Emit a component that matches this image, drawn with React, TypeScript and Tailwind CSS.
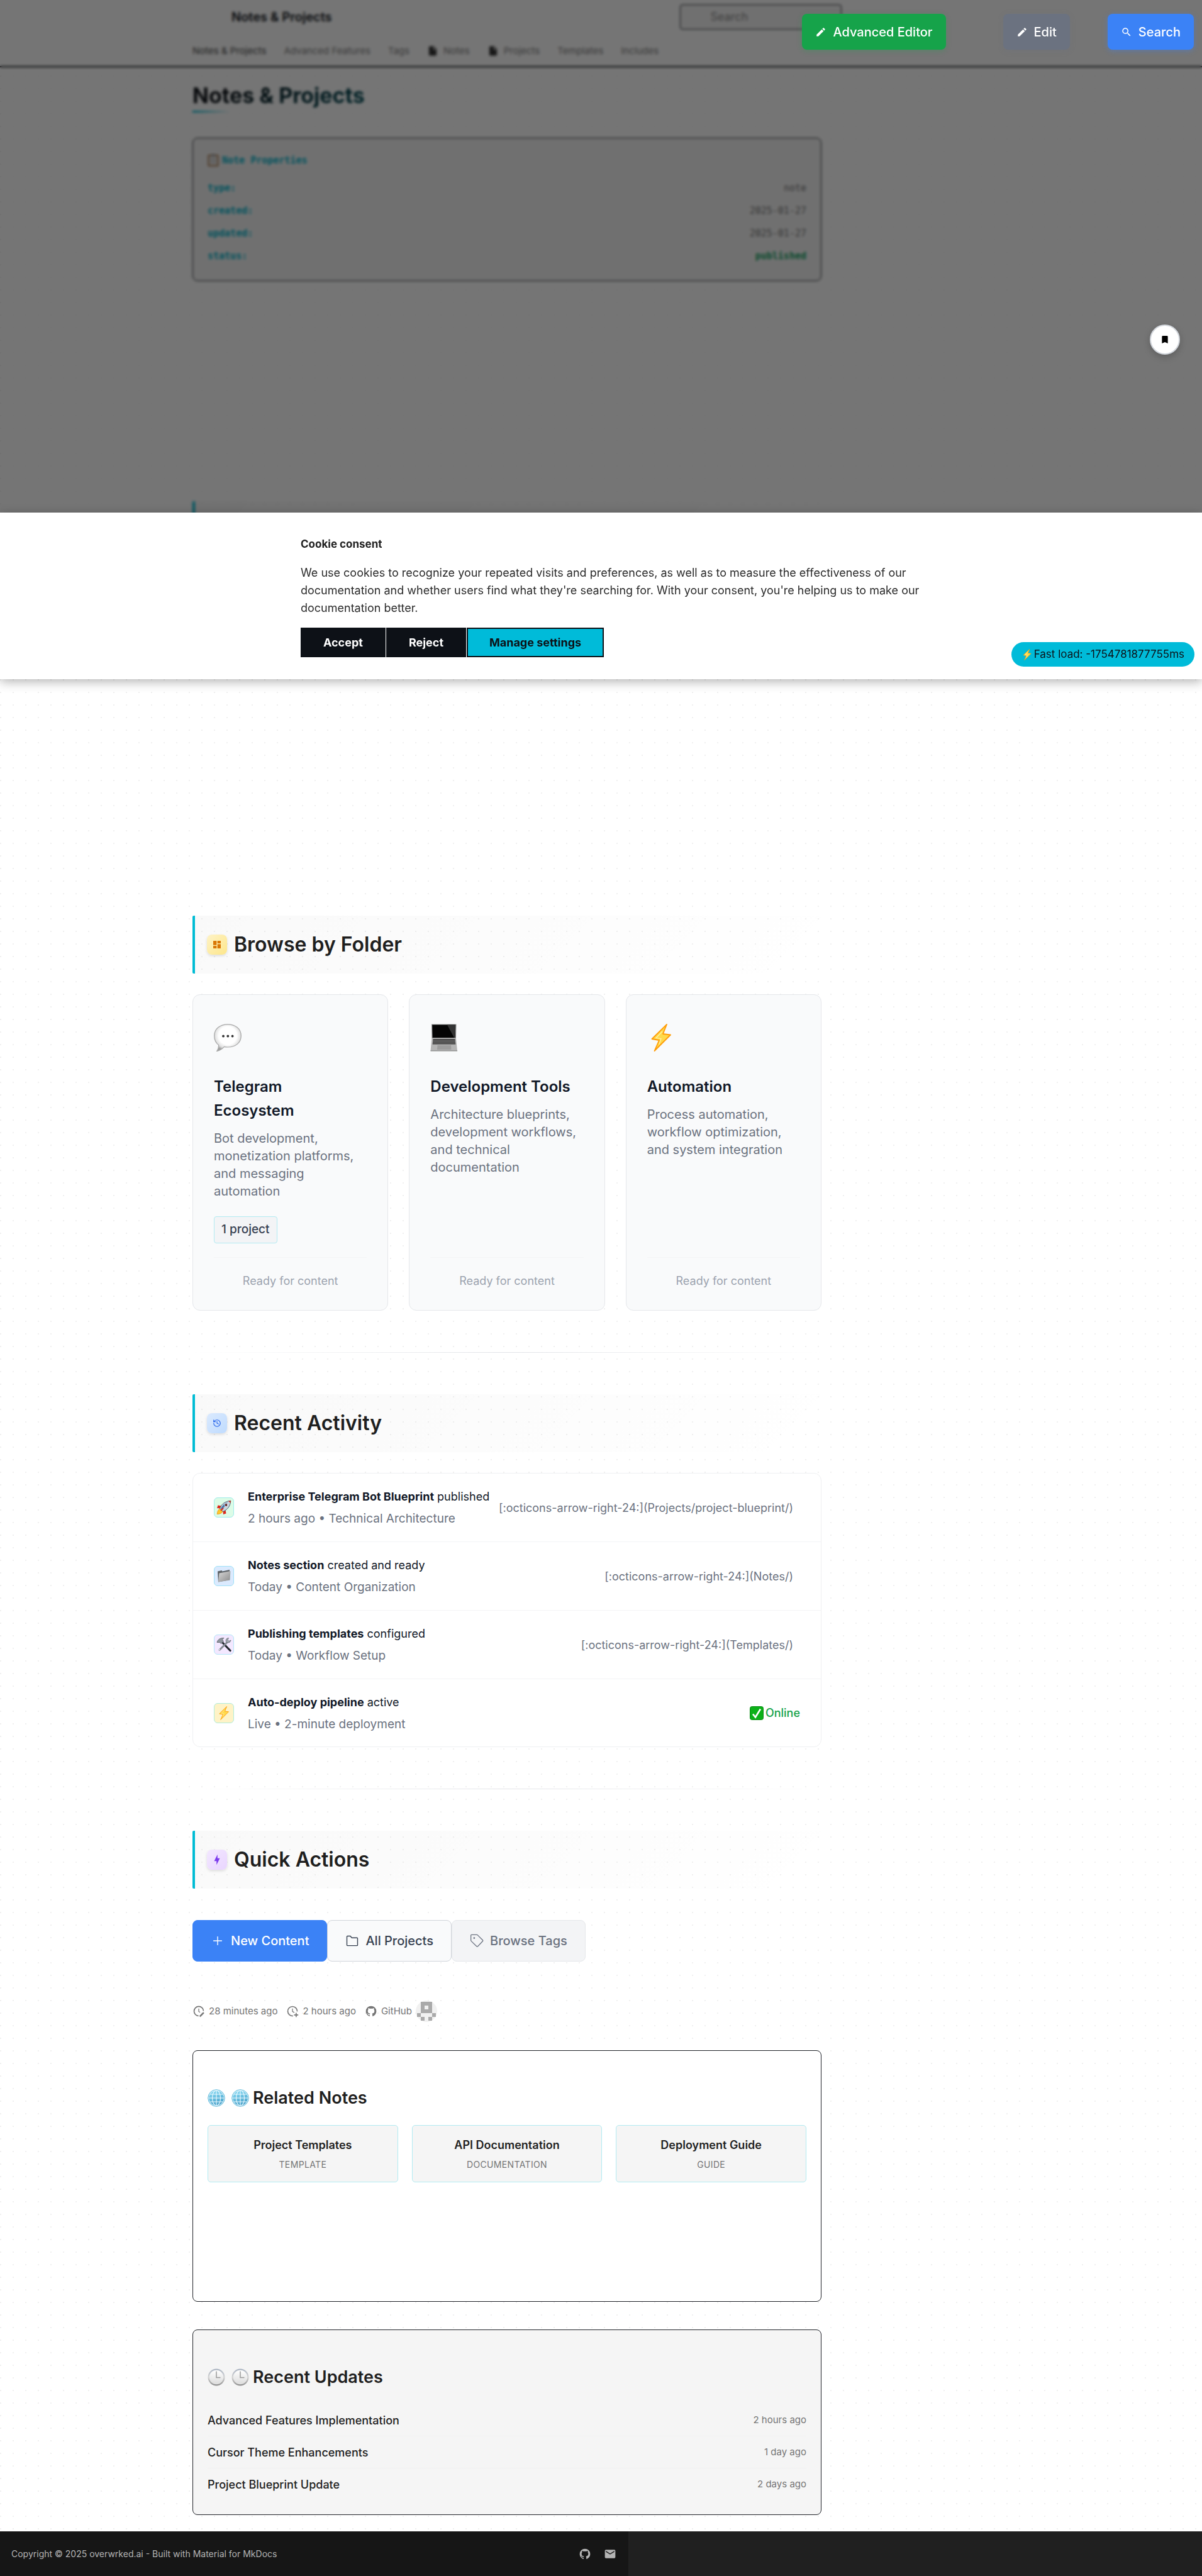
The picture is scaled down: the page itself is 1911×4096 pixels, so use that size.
import type { ReactNode } from "react";
import { History, Plus } from "lucide-react";

/* ---------- icons ---------- */

function Mdi({ d, className }: { d: string; className?: string }) {
  return (
    <svg viewBox="0 0 24 24" fill="currentColor" className={className} aria-hidden="true">
      <path d={d} />
    </svg>
  );
}

const paths = {
  pencil:
    "M20.71 7.04c.39-.39.39-1.04 0-1.41l-2.34-2.34c-.37-.39-1.02-.39-1.41 0l-1.84 1.83 3.75 3.75M3 17.25V21h3.75L17.81 9.93l-3.75-3.75z",
  magnify:
    "M9.5 3A6.5 6.5 0 0 1 16 9.5c0 1.61-.59 3.09-1.56 4.23l.27.27h.79l5 5-1.5 1.5-5-5v-.79l-.27-.27A6.52 6.52 0 0 1 9.5 16 6.5 6.5 0 0 1 3 9.5 6.5 6.5 0 0 1 9.5 3m0 2C7 5 5 7 5 9.5S7 14 9.5 14 14 12 14 9.5 12 5 9.5 5",
  bookmark: "M17 3H7a2 2 0 0 0-2 2v16l7-3 7 3V5a2 2 0 0 0-2-2",
  dashboard: "M13 3v6h8V3m-8 18h8V11h-8M3 21h8v-6H3m0-2h8V3H3z",
  bolt: "M11 15H6l7-14v8h5l-7 14z",
  github:
    "M12 2A10 10 0 0 0 2 12c0 4.42 2.87 8.17 6.84 9.5.5.08.66-.23.66-.5v-1.69c-2.77.6-3.36-1.34-3.36-1.34-.46-1.16-1.11-1.47-1.11-1.47-.91-.62.07-.6.07-.6 1 .07 1.53 1.03 1.53 1.03.87 1.52 2.34 1.07 2.91.83.09-.65.35-1.09.63-1.34-2.22-.25-4.55-1.11-4.55-4.92 0-1.11.38-2 1.03-2.71-.1-.25-.45-1.29.1-2.64 0 0 .84-.27 2.75 1.02.79-.22 1.65-.33 2.5-.33s1.71.11 2.5.33c1.91-1.29 2.75-1.02 2.75-1.02.55 1.35.2 2.39.1 2.64.65.71 1.03 1.6 1.03 2.71 0 3.82-2.34 4.66-4.57 4.91.36.31.69.92.69 1.85V21c0 .27.16.59.67.5C19.14 20.16 22 16.42 22 12A10 10 0 0 0 12 2",
  email:
    "M20 8l-8 5-8-5V6l8 5 8-5m0-2H4c-1.11 0-2 .89-2 2v12a2 2 0 0 0 2 2h16a2 2 0 0 0 2-2V6a2 2 0 0 0-2-2",
  doc: "M6 2h8l6 6v12a2 2 0 0 1-2 2H6a2 2 0 0 1-2-2V4a2 2 0 0 1 2-2m7 1.500V9h5.500zM12 19l6-6v6z",
};

function FolderIcon() {
  return (
    <svg viewBox="0 0 24 24" fill="none" stroke="currentColor" strokeWidth="1.5" strokeLinejoin="round" className="size-[22px]" aria-hidden="true">
      <path d="M3.750 3.750h5l2.500 3h9a1 1 0 0 1 1 1v11.500a1 1 0 0 1-1 1H3.750a1 1 0 0 1-1-1V4.750a1 1 0 0 1 1-1z" />
    </svg>
  );
}

function TagIcon() {
  return (
    <svg viewBox="0 0 24 24" fill="none" stroke="currentColor" strokeWidth="1.4" strokeLinejoin="round" className="size-[22px]" aria-hidden="true">
      <path d="M1.800 2.600a1 1 0 0 1 1-1h9.600a1.500 1.500 0 0 1 1 .4l8.700 8.700a1.500 1.500 0 0 1 0 2.100l-8.300 8.700a1.500 1.500 0 0 1-2.100 0l-9.400-9.100a1.500 1.500 0 0 1-.5-1.100z" />
      <circle cx="7.500" cy="7.200" r="0.800" fill="currentColor" />
    </svg>
  );
}

function ClockEdit() {
  return (
    <svg viewBox="0 0 24 24" fill="none" stroke="currentColor" strokeWidth="2" className="size-5" aria-hidden="true">
      <path d="M11.500 20.900A9 9 0 1 1 21 11.500" />
      <path d="M12 7v5.500l2.500 1.500" strokeWidth="1.500" />
      <path d="M14 22l7.500-7.500" strokeWidth="3" />
    </svg>
  );
}

function ClockPlus() {
  return (
    <svg viewBox="0 0 24 24" fill="none" stroke="currentColor" strokeWidth="2" className="size-5" aria-hidden="true">
      <path d="M13 20.900A9 9 0 1 1 21 12.500" />
      <path d="M12 7v5.500l3.500 2" strokeWidth="1.500" />
      <path d="M19 15v8M15 19h8" />
    </svg>
  );
}

function Avatar() {
  return (
    <svg viewBox="0 0 34 34" className="size-[34px]" role="img" aria-label="Contributor avatar">
      <circle cx="17" cy="17" r="17" fill="#f1f1f1" />
      <g fill="#aaaaaa">
        <path d="M8 2h18v18H8zM14 8v6h6V8z" fillRule="evenodd" />
        <path d="M2 20h6v6H2zM26 20h6v6h-6zM8 26h6v6H8zM20 26h6v6h-6z" />
      </g>
    </svg>
  );
}

/* ---------- pictograms ---------- */

function Bolt({ className }: { className: string }) {
  return (
    <svg viewBox="0 0 44 44" className={className} aria-hidden="true">
      <path d="M31 .8 7.500 24 19 26 11.500 43 37 17.500 25 16z" fill="#ffd94a" stroke="#ff9d0a" strokeWidth="1.800" strokeLinejoin="round" />
      <path d="M24 12 14 22.500l8 1-3 9" fill="none" stroke="#fff2a8" strokeWidth="1.200" />
    </svg>
  );
}

function SpeechBalloon() {
  return (
    <svg viewBox="0 0 44 44" className="size-11" aria-hidden="true">
      <defs>
        <radialGradient id="balloon" cx="0.500" cy="0.420" r="0.560">
          <stop offset="0.600" stopColor="#ffffff" />
          <stop offset="0.850" stopColor="#e0e0e0" />
          <stop offset="1" stopColor="#a0a0a0" />
        </radialGradient>
      </defs>
      <path
        d="M22 .8C34.500.8 43.300 8 43.300 19S34.500 37 22 37c-2 0-4-.2-5.600-.6-2.800 3.400-7 6-11.600 7 1.800-2.800 2.900-6 2.900-9.600C3.200 30.500.7 25.400.7 19 .7 8 9.500.8 22 .8z"
        fill="url(#balloon)"
        stroke="#a8a8a8"
        strokeWidth="1.200"
      />
      <g fill="#333">
        <circle cx="15" cy="19.500" r="1.900" />
        <circle cx="22.300" cy="19.500" r="1.900" />
        <circle cx="29.600" cy="19.500" r="1.900" />
      </g>
    </svg>
  );
}

function Laptop() {
  return (
    <svg viewBox="0 0 44 44" className="size-11" aria-hidden="true">
      <path d="M2 .5h39.500L41 23H2.500z" fill="#8f8f8f" />
      <path d="M3.200 1.500h37L39.800 22H3.600z" fill="#050505" />
      <path d="M27 1.500h13.200L39.800 22H38z" fill="#333" />
      <path d="M2.500 22.500h38.500l2 20.500H.5z" fill="#b4b4b4" />
      <path d="M4.500 24h35l.8 8.500H3.700z" fill="#3a3a3a" />
      <path d="M4.300 26h35.500M4 28.200h36M3.900 30.400h36.300" stroke="#9a9a9a" strokeWidth=".7" />
      <path d="M11.500 34h21.500l.4 7H11z" fill="#9c9c9c" />
      <path d="M.5 42.200h42.600v1.300H.5z" fill="#8a8a8a" />
    </svg>
  );
}

function Rocket() {
  return (
    <svg viewBox="0 0 24 24" className="size-6" aria-hidden="true">
      <path d="M8 9.500 2.500 8.500 1 13l5 .5zM14.500 16l1 5.500-4.500 1.500-.5-5z" fill="#e0281c" />
      <path d="M6 14c-3 1-4.500 4-4.800 8.700C5.500 22.500 9 21 10 18z" fill="#ffc928" stroke="#f08a1d" strokeWidth=".8" />
      <path d="M5.500 13.500C8 7 13.500 2 22.800 1.200 22.500 10 17 16 10.500 18.500z" fill="#c9d6df" stroke="#41586b" strokeWidth=".9" />
      <path d="M7 13.500C9.500 9 13 5.500 18 3.500L9 16z" fill="#4a78a8" />
      <path d="M19 1.800c1.200-.4 2.500-.6 3.800-.6 0 1.300-.2 2.600-.5 3.800z" fill="#d9362b" />
      <circle cx="15.500" cy="8" r="2.300" fill="#5b1d1d" stroke="#e9eef2" strokeWidth=".8" />
      <path d="M7 17l4-4" stroke="#e0281c" strokeWidth="2" />
    </svg>
  );
}

function FileFolder() {
  return (
    <svg viewBox="0 0 24 24" className="size-6" aria-hidden="true">
      <defs>
        <linearGradient id="folder" x1="0" y1="0" x2="1" y2="1">
          <stop offset="0" stopColor="#d8d8d8" />
          <stop offset="1" stopColor="#8b8b8b" />
        </linearGradient>
      </defs>
      <path d="M2 4.500 8.500 3l1 1.500L21 2v16L3 21.500z" fill="#5d6266" />
      <path d="M4.500 7.500 22.500 4l-1 14.500L3 21.500z" fill="url(#folder)" />
    </svg>
  );
}

function Tools() {
  return (
    <svg viewBox="0 0 24 24" className="size-6" aria-hidden="true">
      <path d="M8.500 7.500 22 21.500" stroke="#20252b" strokeWidth="3.200" strokeLinecap="round" />
      <path d="M1 8.500C2 4 6 1.200 12 1.500L9.500 4l2 3-4 3.500-2.300-2z" fill="#8d949c" stroke="#565c63" strokeWidth=".8" />
      <path d="M17.500 8 5 20.500" stroke="#858c94" strokeWidth="3" strokeLinecap="round" />
      <path d="M19.500 1.500c-3.500 0-5.300 3.300-4 6.300 2.500 2.200 7 1.200 7.500-2.800l-3 1.500-2-2z" fill="#a1a8b0" stroke="#656b72" strokeWidth=".8" />
      <circle cx="5" cy="20.300" r="1" fill="#e9edf0" />
    </svg>
  );
}

function CheckMark() {
  return (
    <svg viewBox="0 0 22 22" className="size-[22px]" aria-hidden="true">
      <rect x=".5" y=".5" width="21" height="21" rx="3" fill="#0bb118" stroke="#078a10" />
      <path d="M5 12.500 9 17.500 17 4.500" fill="none" stroke="#fff" strokeWidth="2.600" />
    </svg>
  );
}

function Globe() {
  return (
    <svg viewBox="0 0 28 28" className="size-7" aria-hidden="true">
      <defs>
        <linearGradient id="globe" x1="0" y1="0" x2="0.300" y2="1">
          <stop offset="0" stopColor="#8fe0f7" />
          <stop offset="1" stopColor="#4ba3cb" />
        </linearGradient>
      </defs>
      <circle cx="14" cy="14" r="13.200" fill="url(#globe)" />
      <g fill="none" stroke="#eefaff" strokeWidth="1.100">
        <circle cx="14" cy="14" r="12.400" />
        <ellipse cx="14" cy="14" rx="6.500" ry="12.400" />
        <path d="M14 1.500v25M1.500 14h25M3.500 8h21M3.500 20h21" />
      </g>
      <circle cx="14" cy="14" r="13.300" fill="none" stroke="#58b5d8" strokeWidth=".9" />
    </svg>
  );
}

function ClockFace() {
  return (
    <svg viewBox="0 0 28 28" className="size-7" aria-hidden="true">
      <defs>
        <linearGradient id="rim" x1="0" y1="0" x2="0" y2="1">
          <stop offset="0" stopColor="#aab4c2" />
          <stop offset="0.500" stopColor="#d5d5d5" />
          <stop offset="1" stopColor="#8d8d8d" />
        </linearGradient>
        <linearGradient id="face" x1="0" y1="0" x2="0" y2="1">
          <stop offset="0" stopColor="#ffffff" />
          <stop offset="1" stopColor="#dcdcdc" />
        </linearGradient>
      </defs>
      <circle cx="14" cy="14" r="13.500" fill="url(#rim)" />
      <circle cx="14" cy="14" r="11.200" fill="url(#face)" />
      <path d="M14 4.500V14.500h6.500" fill="none" stroke="#9b9b9b" strokeWidth="1.500" />
    </svg>
  );
}

function Clipboard() {
  return (
    <svg viewBox="0 0 18 20" className="h-5 w-[18px]" aria-hidden="true">
      <rect x=".5" y="1" width="17" height="18.500" rx="1.500" fill="#a67444" />
      <rect x="2.500" y="3" width="13" height="14.500" fill="#eeeeee" />
      <rect x="6" y="0" width="6" height="3.500" fill="#999" />
      <path d="M4.500 7h9M4.500 10h9M4.500 13h9" stroke="#aaa" />
    </svg>
  );
}

/* ---------- shared pieces ---------- */

function SectionHeading({ icon, children }: { icon: ReactNode; children: ReactNode }) {
  return (
    <h2 className="flex h-[92px] items-center gap-[11px] rounded-[2px] border-l-4 border-[#00bcd4] bg-linear-[135deg,rgba(0,0,0,0.022),rgba(0,0,0,0)] pl-[19px] text-[32px] font-semibold text-[#1f1f1f]">
      {icon}
      {children}
    </h2>
  );
}

function Divider() {
  return <hr className="my-[66px] h-px border-0 bg-linear-[to_right,transparent,#e2e4e8,transparent]" />;
}

const tile = "flex size-8 items-center justify-center rounded-lg shadow-[0_2px_4px_rgba(0,0,0,0.12)]";

const folders = [
  {
    icon: <SpeechBalloon />,
    title: "Telegram Ecosystem",
    text: "Bot development, monetization platforms, and messaging automation",
    badge: "1 project",
  },
  {
    icon: <Laptop />,
    title: "Development Tools",
    text: "Architecture blueprints, development workflows, and technical documentation",
  },
  {
    icon: <Bolt className="size-11" />,
    title: "Automation",
    text: "Process automation, workflow optimization, and system integration",
  },
];

const activity = [
  {
    icon: <Rocket />,
    tint: "bg-[#dcfce7] border-[#a0ecea]",
    name: "Enterprise Telegram Bot Blueprint",
    rest: "published",
    meta: "2 hours ago • Technical Architecture",
    link: "[:octicons-arrow-right-24:](Projects/project-blueprint/)",
  },
  {
    icon: <FileFolder />,
    tint: "bg-[#dbeafe] border-[#a0e2f8]",
    name: "Notes section",
    rest: "created and ready",
    meta: "Today • Content Organization",
    link: "[:octicons-arrow-right-24:](Notes/)",
  },
  {
    icon: <Tools />,
    tint: "bg-[#f3e8ff] border-[#b4e6f8]",
    name: "Publishing templates",
    rest: "configured",
    meta: "Today • Workflow Setup",
    link: "[:octicons-arrow-right-24:](Templates/)",
  },
  {
    icon: <Bolt className="size-[22px]" />,
    tint: "bg-[#fef3c7] border-[#b0ecdc]",
    name: "Auto-deploy pipeline",
    rest: "active",
    meta: "Live • 2-minute deployment",
  },
];

const properties = [
  { key: "type:", value: "note", tone: "text-[#757575]" },
  { key: "created:", value: "2025-01-27", tone: "text-[#757575]" },
  { key: "updated:", value: "2025-01-27", tone: "text-[#757575]" },
  { key: "status:", value: "published", tone: "font-bold text-[#10a060]" },
];

const related = [
  { title: "Project Templates", kind: "TEMPLATE" },
  { title: "API Documentation", kind: "DOCUMENTATION" },
  { title: "Deployment Guide", kind: "GUIDE" },
];

const updates = [
  { title: "Advanced Features Implementation", when: "2 hours ago" },
  { title: "Cursor Theme Enhancements", when: "1 day ago" },
  { title: "Project Blueprint Update", when: "2 days ago" },
];

/* ---------- page parts ---------- */

function Header() {
  return (
    <header className="border-b-2 border-[#0d1117] bg-white">
      <div className="flex h-[53px] items-center pl-[368px]">
        <a href="#" className="text-xl font-semibold text-[#0d1117]">Notes &amp; Projects</a>
        <input
          type="search"
          aria-label="Search"
          placeholder="Search"
          className="ml-[553px] h-10 w-[257px] rounded-[4px] border border-[#0d1117] bg-[#f5f5f5] pl-[48px] text-[18px] placeholder:text-[#8a8a8a]"
        />
      </div>
      <nav className="flex h-[52px] items-center gap-7 pt-1 pl-[306px] text-[15px] text-[#808080]">
        <a href="#" className="text-[#4a4a4a]">Notes &amp; Projects</a>
        <a href="#">Advanced Features</a>
        <a href="#">Tags</a>
        <a href="#" className="flex items-center gap-2">
          <Mdi d={paths.doc} className="size-[18px] text-[#333333]" />
          Notes
        </a>
        <a href="#" className="flex items-center gap-2">
          <Mdi d={paths.doc} className="size-[18px] text-[#333333]" />
          Projects
        </a>
        <a href="#">Templates</a>
        <a href="#">Includes</a>
      </nav>
    </header>
  );
}

function NoteProperties() {
  return (
    <section className="mt-10 rounded-lg border border-[#0d1117] bg-[#f5f5f5] px-[23px] py-[21px] font-['DejaVu_Sans_Mono',monospace] text-[15px]">
      <h2 className="mb-3 flex h-7 items-center gap-[5px] font-bold text-[#00b4cc]">
        <Clipboard />
        Note Properties
      </h2>
      <dl>
        {properties.map((p) => (
          <div key={p.key} className="flex h-9 items-center justify-between">
            <dt className="font-bold text-[#00b4cc]">{p.key}</dt>
            <dd className={p.tone}>{p.value}</dd>
          </div>
        ))}
      </dl>
    </section>
  );
}

function FolderCards() {
  return (
    <div className="mt-[33px] grid grid-cols-3 gap-[33px]">
      {folders.map((f) => (
        <article key={f.title} className="flex flex-col rounded-xl border border-[#e5e7eb] bg-[#f9fafb] p-[33px]">
          <div className="pt-[13px]">{f.icon}</div>
          <h3 className="mt-[37px] pr-4 text-2xl leading-[38px] font-semibold text-[#111827]">{f.title}</h3>
          <p className="mt-[11px] text-xl leading-7 text-[#6b7280]">{f.text}</p>
          {f.badge && (
            <span className="mt-[26px] mb-[22px] flex h-[43px] items-center self-start rounded-[4px] border border-[#b2ebf2] bg-[#f3f4f6] px-[11px] text-[19px] font-medium text-[#374151]">
              {f.badge}
            </span>
          )}
          <p className="mt-auto border-t border-[#f3f4f6] pt-6 text-center text-[18px] leading-[26px] text-[#9ca3af]">
            Ready for content
          </p>
        </article>
      ))}
    </div>
  );
}

function ActivityList() {
  return (
    <ul className="mt-[33px] divide-y divide-[#f3f4f6] rounded-xl border border-[#eff0f2] bg-white">
      {activity.map((a) => (
        <li key={a.name} className="flex h-[109px] items-center px-[33px] last:h-[107px]">
          <span className={`mr-[22px] flex size-8 shrink-0 items-center justify-center rounded-md border ${a.tint}`}>
            {a.icon}
          </span>
          <div className="leading-[35px] whitespace-nowrap">
            <p className="text-[18px] text-[#111827]">
              <strong className="font-bold">{a.name}</strong> {a.rest}
            </p>
            <p className="text-[19px] text-[#6b7280]">{a.meta}</p>
          </div>
          {a.link ? (
            <span className="ml-auto pr-[11px] text-[18px] whitespace-nowrap text-[#6b7280]">{a.link}</span>
          ) : (
            <span className="ml-auto flex items-center gap-[3px] text-[18px] font-medium text-[#16a34a]">
              <CheckMark />
              Online
            </span>
          )}
        </li>
      ))}
    </ul>
  );
}

function QuickActions() {
  const base = "flex h-[66px] items-center gap-2.5 rounded-lg border px-7 text-xl font-medium";
  return (
    <div className="mt-[50px] flex">
      <a href="#" className={`${base} border-[#3b82f6] bg-[#3b82f6] text-white`}>
        <Plus className="size-[22px]" strokeWidth={1.5} />
        New Content
      </a>
      <a href="#" className={`${base} border-[#d1d5db] bg-[#f9fafb] text-[#374151]`}>
        <FolderIcon />
        All Projects
      </a>
      <a href="#" className={`${base} border-[#e5e7eb] bg-[#f3f4f6] text-[#6b7280]`}>
        <TagIcon />
        Browse Tags
      </a>
    </div>
  );
}

function SourceMeta() {
  return (
    <div className="mt-[61px] flex h-9 items-center gap-3.5 text-[15px] text-[#757575]">
      <span className="flex items-center gap-1.5">
        <ClockEdit />
        28 minutes ago
      </span>
      <span className="flex items-center gap-1.5">
        <ClockPlus />
        2 hours ago
      </span>
      <span className="flex items-center gap-1.5">
        <Mdi d={paths.github} className="size-5" />
        GitHub
        <Avatar />
      </span>
    </div>
  );
}

function RelatedNotes() {
  return (
    <section className="mt-11 min-h-[400px] rounded-lg border border-[#22252b] bg-white px-[23px] pt-14">
      <h2 className="flex h-[38px] items-center gap-1.5 text-[27px] font-semibold text-[#1f1f1f]">
        <span className="flex gap-2.5">
          <Globe />
          <Globe />
        </span>
        Related Notes
      </h2>
      <div className="mt-6 grid grid-cols-3 gap-[22px]">
        {related.map((r) => (
          <a key={r.title} href="#" className="h-[91px] rounded-[5px] border border-[#b2ebf2] bg-[#f5f5f5] pt-[15px] text-center">
            <span className="block text-[18px] leading-8 font-semibold text-[#1f1f1f]">{r.title}</span>
            <span className="block text-sm leading-[30px] tracking-wide text-[#757575]">{r.kind}</span>
          </a>
        ))}
      </div>
    </section>
  );
}

function RecentUpdates() {
  return (
    <section className="mt-11 rounded-lg border border-[#22252b] bg-[#f5f5f5] px-[23px] pt-14 pb-[22px]">
      <h2 className="mb-6 flex h-[38px] items-center gap-1.5 text-[27px] font-semibold text-[#1f1f1f]">
        <span className="flex gap-2.5">
          <ClockFace />
          <ClockFace />
        </span>
        Recent Updates
      </h2>
      <ul className="divide-y divide-[#f1f1f1]">
        {updates.map((u) => (
          <li key={u.title} className="flex h-[51px] items-center justify-between">
            <a href="#" className="text-[18px] font-medium text-[#1f1f1f]">{u.title}</a>
            <time className="text-[15px] text-[#757575]">{u.when}</time>
          </li>
        ))}
      </ul>
    </section>
  );
}

function Footer() {
  return (
    <footer className="mt-[26px] bg-[#202020]">
      <div className="flex h-[71px] max-w-[999px] items-center bg-[#161616] pr-[19px] pl-[18px] text-[#b4b4b4]">
        <p className="text-sm">
          Copyright © 2025 overwrked.ai - Built with <a href="#">Material for MkDocs</a>
        </p>
        <div className="ml-auto flex gap-5">
          <a href="#" aria-label="GitHub"><Mdi d={paths.github} className="size-5" /></a>
          <a href="#" aria-label="Email"><Mdi d={paths.email} className="size-5" /></a>
        </div>
      </div>
    </footer>
  );
}

function FloatingTools() {
  const base = "flex h-[57px] items-center gap-2.5 rounded-lg px-[21px] text-xl font-medium text-white";
  return (
    <div className="absolute top-[22px] right-[13px] flex">
      <button type="button" className={`${base} bg-[#16a34a] shadow-[0_2px_8px_rgba(22,163,74,0.3)]`}>
        <Mdi d={paths.pencil} className="size-[18px]" />
        Advanced Editor
      </button>
      <button type="button" className={`${base} ml-[91px] bg-[#6b7280] shadow-[0_2px_8px_rgba(107,114,128,0.3)]`}>
        <Mdi d={paths.pencil} className="size-[18px]" />
        Edit
      </button>
      <button type="button" className={`${base} ml-[60px] bg-[#3b82f6] shadow-[0_2px_8px_rgba(59,130,246,0.4)]`}>
        <Mdi d={paths.magnify} className="size-[18px]" />
        Search
      </button>
    </div>
  );
}

function CookieDialog() {
  const base = "h-[47px] border-2 border-[#0d1117] px-[34px] text-[18px] font-bold";
  return (
    <div role="dialog" aria-labelledby="consent-title" className="absolute inset-x-0 top-[815px] h-[265px] bg-white pt-9 pl-[478px] text-[#2a2a2a] shadow-[0_4px_16px_rgba(0,0,0,0.3)]">
      <h2 id="consent-title" className="text-[17px] leading-7 font-bold text-[#212121]">Cookie consent</h2>
      <p className="mt-[18px] max-w-[1000px] text-[18px] leading-7">
        We use cookies to recognize your repeated visits and preferences, as well as to measure the effectiveness of our
        documentation and whether users find what they're searching for. With your consent, you're helping us to make our
        documentation better.
      </p>
      <div className="mt-[17px] flex gap-px">
        <button type="button" className={`${base} bg-[#0d1117] text-white`}>Accept</button>
        <button type="button" className={`${base} bg-[#0d1117] text-white`}>Reject</button>
        <button type="button" className={`${base} bg-[#00bbd9] text-[#0d1117]`}>Manage settings</button>
      </div>
    </div>
  );
}

export default function App() {
  return (
    <div className="relative overflow-x-hidden bg-white bg-[radial-gradient(circle_at_1px_1px,#f0f0f0_1px,transparent_0)] bg-size-[20px_20px] font-['Inter',sans-serif] text-[#212121]">
      <Header />

      <main className="ml-[306px] w-full max-w-[1000px]">
        <h1 className="mt-[21px] w-fit bg-linear-[135deg,#0d1117_20%,#00505c] bg-clip-text text-[34px] leading-[48px] font-bold text-transparent">
          Notes &amp; Projects
        </h1>
        <div className="h-[3px] w-[60px] bg-linear-[to_right,#00bcd4,transparent]" />
        <NoteProperties />

        <div className="mt-[350px] mb-[567px] h-[92px] rounded-[2px] border-l-4 border-[#00bcd4] bg-linear-[135deg,rgba(0,0,0,0.022),rgba(0,0,0,0)]" />

        <SectionHeading
          icon={
            <span className={`${tile} bg-linear-[135deg,#fef3c7,#fde68a] text-[#d97706]`}>
              <Mdi d={paths.dashboard} className="size-4" />
            </span>
          }
        >
          Browse by Folder
        </SectionHeading>
        <FolderCards />

        <Divider />

        <SectionHeading
          icon={
            <span className={`${tile} bg-linear-[135deg,#dbeafe,#bfdbfe] text-[#2563eb]`}>
              <History className="size-3.5" strokeWidth={2} />
            </span>
          }
        >
          Recent Activity
        </SectionHeading>
        <ActivityList />

        <Divider />

        <SectionHeading
          icon={
            <span className={`${tile} bg-linear-[135deg,#f3e8ff,#e9d5ff] text-[#7c3aed]`}>
              <Mdi d={paths.bolt} className="size-[18px]" />
            </span>
          }
        >
          Quick Actions
        </SectionHeading>
        <QuickActions />

        <SourceMeta />
        <RelatedNotes />
        <RecentUpdates />
      </main>

      <Footer />

      <div className="absolute inset-x-0 top-0 h-[1080px] bg-black/54 backdrop-blur-[2px]" />
      <FloatingTools />
      <button
        type="button"
        aria-label="Bookmark"
        className="absolute top-[516px] right-[35px] flex size-12 items-center justify-center rounded-full border-2 border-[#d1d5db] bg-white text-black shadow-[0_4px_12px_rgba(0,0,0,0.2)]"
      >
        <Mdi d={paths.bookmark} className="size-4" />
      </button>
      <CookieDialog />
      <div className="absolute top-[1021px] right-3 flex h-[39px] items-center gap-0.5 rounded-[20px] bg-[#00bbd9] px-4 text-[17px] text-[#0d1117]">
        <Bolt className="size-[18px]" />
        Fast load: -1754781877755ms
      </div>
    </div>
  );
}
